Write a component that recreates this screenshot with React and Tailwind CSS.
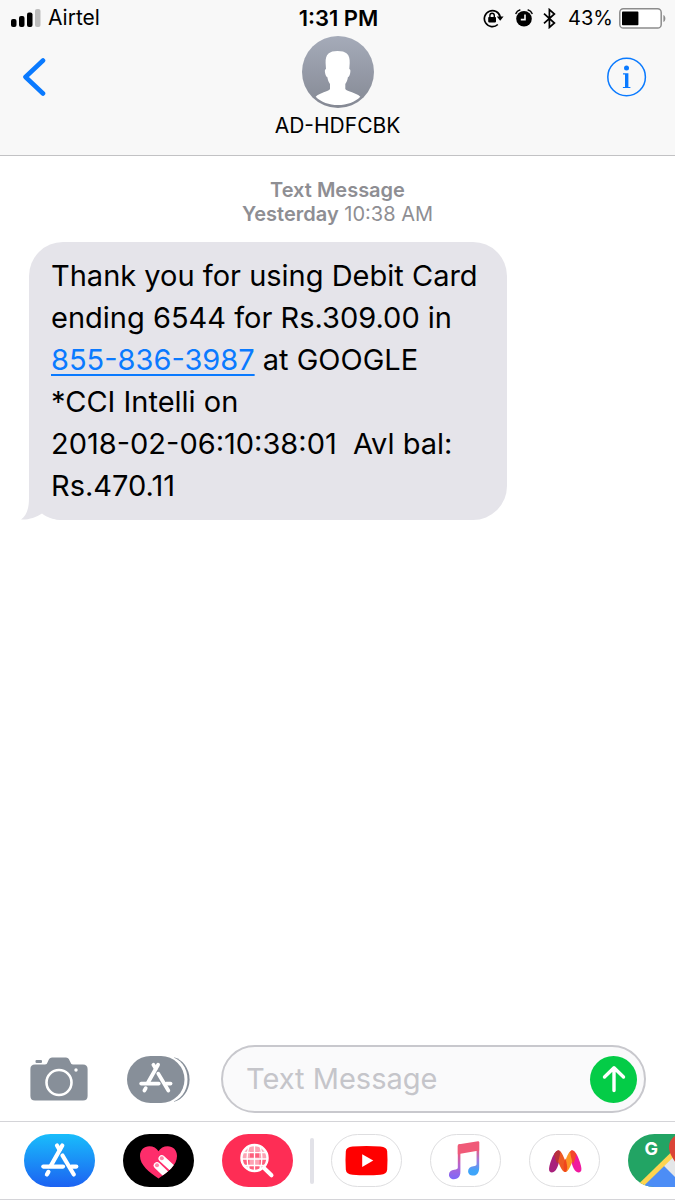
import React, { useState } from 'react';

const SignalBars = () => (
  <svg width="31" height="18" viewBox="0 0 31 18" aria-hidden="true">
    <rect x="0" y="10" width="5.5" height="8" rx="2" fill="#000" />
    <rect x="8" y="7" width="5.5" height="11" rx="2" fill="#000" />
    <rect x="16" y="3.5" width="5.5" height="14.5" rx="2" fill="#000" />
    <rect x="24" y="0" width="5.5" height="18" rx="2" fill="#bdbdbd" />
  </svg>
);

const RotationLock = () => (
  <svg width="21" height="20" viewBox="0 0 21 20" fill="none" aria-hidden="true">
    <path d="M14.8 16.5A8 8 0 1 1 17.2 9" stroke="#000" strokeWidth="1.7" />
    <path d="M13.8 8.4h6.8l-3.400 4.400z" fill="#000" />
    <rect x="5.200" y="9" width="7.800" height="5.400" rx="0.8" fill="#000" />
    <path d="M6.900 9.200V7.400a2.200 2.200 0 0 1 4.400 0v1.800" stroke="#000" strokeWidth="1.400" />
  </svg>
);

const AlarmClock = () => (
  <svg width="18" height="18" viewBox="0 0 18 18" fill="none" aria-hidden="true">
    <circle cx="9" cy="9.8" r="7.800" fill="#000" />
    <path d="M.9 4.400Q2 1.600 4.800.9M17.100 4.400Q16 1.600 13.200.9" stroke="#000" strokeWidth="1.500" strokeLinecap="round" />
    <path d="M10 5.400v5.200H5.800" stroke="#f8f8f8" strokeWidth="1.600" />
  </svg>
);

const Bluetooth = () => (
  <svg width="13" height="21" viewBox="0 0 13 21" fill="none" aria-hidden="true">
    <path d="M1 5.600l10.400 9.400-5 4.400V1.600l5 4.400L1 15.400" stroke="#000" strokeWidth="1.700" />
  </svg>
);

const Battery = () => (
  <svg width="47" height="21" viewBox="0 0 47 21" fill="none" aria-hidden="true">
    <rect x="0.8" y="0.8" width="41.4" height="19.2" rx="3.6" fill="#fff" stroke="#8c8c8c" strokeWidth="1.5" />
    <rect x="3" y="3.6" width="16.4" height="13.6" rx="0.8" fill="#000" />
    <path d="M44.4 7c2.6 1 2.6 6 0 7z" fill="#8c8c8c" />
  </svg>
);

const Avatar = () => (
  <svg width="72" height="72" viewBox="0 0 72 72" aria-hidden="true">
    <defs>
      <linearGradient id="avatarBg" x1="0" y1="0" x2="0" y2="1">
        <stop offset="0" stopColor="#a5abb9" />
        <stop offset="1" stopColor="#858994" />
      </linearGradient>
    </defs>
    <circle cx="36" cy="36" r="36" fill="url(#avatarBg)" />
    <path
      d="M35.500 15c-4 0-7 .8-9 2.500-2.400 2-3 5.500-2.900 9.500l.4 6c-1.300.3-1.300 2-.9 4 .4 2.200 1.100 3.800 2.300 4.200.4 3 1.200 4.800 2.600 6.800V53c-1.500 2.600-10.500 3.600-14.300 7.700C19 66 27 69 36 69s17-3 22.300-8.300C54.500 56.600 45 55.600 43.300 53v-5c1.400-2 2.200-3.800 2.600-6.800 1.200-.4 1.900-2 2.300-4.200.4-2 .4-3.700-.9-4l.4-6c.1-4-.5-7.500-2.900-9.500-2-1.700-5-2.500-9.300-2.500z"
      fill="#fff"
    />
  </svg>
);

const InfoIcon = () => (
  <svg width="40" height="40" viewBox="0 0 40 40" fill="none" aria-hidden="true">
    <circle cx="19.600" cy="20" r="18.800" stroke="#0a7aff" strokeWidth="1.500" />
    <circle cx="19.500" cy="11" r="2.500" fill="#0a7aff" />
    <path d="M16 16.300h5.400v13.600h2v1.200h-7.500v-1.200h2.100V17.500h-2z" fill="#0a7aff" />
  </svg>
);

const CameraIcon = () => (
  <svg width="58" height="44" viewBox="0 0 58 44" fill="none" aria-hidden="true">
    <path
      d="M5 7.500h10c1.500 0 2-.8 2.700-2.500C19 1.500 20 .4 23 .4h12c3 0 4 1.100 5.300 4.600.7 1.700 1.200 2.500 2.700 2.500h10c3 0 4.600 1.600 4.600 4.600V39c0 3-1.600 4.600-4.600 4.600H5C2 43.600.4 42 .4 39V12.100c0-3 1.600-4.600 4.600-4.600z"
      fill="#878f99"
    />
    <rect x="5.500" y="3" width="6.500" height="3" rx="1" fill="#878f99" />
    <circle cx="29" cy="25.500" r="12.500" stroke="#fff" strokeWidth="2.600" />
    <circle cx="46" cy="13" r="1.700" fill="#fff" />
  </svg>
);

const StoreStrokes = () => (
  <g stroke="#fff" strokeWidth="4.200" strokeLinecap="round" fill="none">
    <path d="M38.300 11.500L27 31.500" />
    <path d="M33 11.500l2.600 4.300" />
    <path d="M38.500 21.500L49.800 40.500" />
    <path d="M19.300 32.600H39" />
    <path d="M47.500 32.600h4.800" />
    <path d="M24.400 37.900l-1.500 2.600" />
  </g>
);

const AppsIcon = () => (
  <svg width="63" height="47" viewBox="0 0 63 47" fill="none" aria-hidden="true">
    <path d="M47 1.200C55 3 62.600 12 62.600 23.500S55 44 47 45.800z" fill="#878f99" />
    <path d="M27 -1h7c15 0 26.500 9 26.500 24.500S49 48 34 48h-7z" fill="#fff" />
    <rect x="0" y="0" width="57.500" height="47" rx="23.500" fill="#878f99" />
    <g transform="translate(-3 -1.500) scale(.89)">
      <StoreStrokes />
    </g>
  </svg>
);

const StoreApp = () => (
  <svg viewBox="0 0 71 53" className="size-full" aria-hidden="true">
    <defs>
      <linearGradient id="storeBg" x1="0" y1="0" x2="0" y2="1">
        <stop offset="0" stopColor="#19bdfb" />
        <stop offset="1" stopColor="#1c62f2" />
      </linearGradient>
    </defs>
    <rect width="71" height="53" fill="url(#storeBg)" />
    <StoreStrokes />
  </svg>
);

const HeartApp = () => (
  <svg viewBox="0 0 71 53" className="size-full" aria-hidden="true">
    <defs>
      <clipPath id="heartClip">
        <path d="M35.500 44.500C26 38 17 31 17 22c0-6 4.200-9.700 9.300-9.700 4 0 7.400 1.900 9.200 5 1.800-3.100 5.200-5 9.200-5 5.100 0 9.300 3.700 9.300 9.700 0 9-9 16-18.500 22.500z" />
      </clipPath>
    </defs>
    <rect width="71" height="53" fill="#000" />
    <g clipPath="url(#heartClip)">
      <rect width="71" height="53" fill="#fe2d6b" />
      <g strokeLinecap="round" strokeWidth="6.600" stroke="#fff">
        <path d="M38.800 24.500L53 37.500" />
        <path d="M34 31.500L48 45" />
      </g>
      <circle cx="38.800" cy="24.300" r="2" fill="#ff86a9" />
      <circle cx="34" cy="31.300" r="2" fill="#ff86a9" />
    </g>
  </svg>
);

const ImagesApp = () => (
  <svg viewBox="0 0 71 53" className="size-full" fill="none" aria-hidden="true">
    <rect width="71" height="53" fill="#fe2d55" />
    <circle cx="32.500" cy="24" r="13" fill="#fda3b4" />
    <path d="M28 17.500h9v6h-9zM20.500 25h7v6h-7zM37.500 25h6.500v6h-6.500zM28 31.500h9v5h-9z" fill="#fe5f7d" />
    <path d="M20 18.500h25M19 25h27M21 31.500h23M32.500 11v26M27 12c-2.500 8-2.500 16 0 24M38 12c2.500 8 2.500 16 0 24" stroke="#fff" strokeWidth="1.300" />
    <circle cx="32.500" cy="24" r="13" stroke="#fff" strokeWidth="2.500" />
    <path d="M42.500 34.500l7 6.800" stroke="#fff" strokeWidth="4" strokeLinecap="round" />
  </svg>
);

const YoutubeApp = () => (
  <svg viewBox="0 0 71 53" className="size-full" aria-hidden="true">
    <path d="M21 12Q35.500 10.800 50 12q6.500.4 7 5 .7 9.500 0 19-.5 4.800-7 5.200-14.500 1.200-29 0-6.500-.4-7-5.200-.7-9.500 0-19 .5-4.600 7-5z" fill="#f00" />
    <path d="M31 20v13.200l11.500-6.600z" fill="#fff" />
  </svg>
);

const MusicApp = () => (
  <svg viewBox="0 0 71 53" className="size-full" aria-hidden="true">
    <defs>
      <linearGradient id="noteLeft" x1="0" y1="0" x2="0" y2="1">
        <stop offset="0.200" stopColor="#f4566f" />
        <stop offset="0.600" stopColor="#b565d0" />
        <stop offset="1" stopColor="#7c68fa" />
      </linearGradient>
      <linearGradient id="noteRight" x1="0" y1="0" x2="0" y2="1">
        <stop offset="0.200" stopColor="#ee5b80" />
        <stop offset="0.550" stopColor="#a07be0" />
        <stop offset="0.850" stopColor="#3fa5fa" />
      </linearGradient>
    </defs>
    <path d="M27.500 11.200q0-1.400 1.500-1.700l1.200-.2V38.500c0 5-3.200 7.500-6.700 7.500-3 0-5.200-2-5.200-4.700 0-3 2.300-4.800 5.500-5.200 2.500-.3 3.700-.6 3.700-2z" fill="url(#noteLeft)" />
    <path d="M47 8l2.700-.6V34c0 5.500-2.500 8.200-6.300 8.200-3 0-5.200-2-5.200-4.600 0-3 2.300-4.800 5.400-5.200 2.600-.3 3.400-.8 3.400-2.300z" fill="url(#noteRight)" />
    <path d="M27.500 11.200q0-1.400 1.500-1.700l19.500-3.100q1.200-.1 1.200 1V16l-19.500 3.500-2.700.6z" fill="#f05a78" />
  </svg>
);

const MyntraApp = () => (
  <svg viewBox="0 0 71 53" className="size-full" aria-hidden="true">
    <path d="M29 16c-3 0-6 6-8 12-1.500 4.800-2.200 8.500-.8 10 1.500 1.600 4.500 1 6.300-1.500C29 33 31 25 31.500 18c-.5-1.500-1.300-2-2.500-2z" fill="#a8207c" />
    <path d="M43.500 16c3 0 6 6 8 12 1.500 4.800 2.200 8.500.8 10-1.500 1.600-4.500 1-6.300-1.500C43.500 33 41.500 25 41 18c.5-1.500 1.300-2 2.500-2z" fill="#f0199e" />
    <path d="M29 16c3.500 0 6.500 8 8.500 15 .8 3 .5 7.500-1.300 7.500-3.200 0-7.200-9-9.200-17 0-3 .5-5.500 2-5.500z" fill="#ee5a24" />
    <path d="M43.500 16c-3.500 0-6.500 8-8.500 15-.8 3-.5 7.500 1.300 7.500 3.200 0 7.200-9 9.200-17 0-3-.5-5.500-2-5.500z" fill="#fb9526" />
    <path d="M36.300 24.500c1 2.500 1.500 5 2 8.500.2 2.500-.7 5.500-2 5.500s-2.200-3-2-5.500c.5-3.500 1-6 2-8.500z" fill="#f1451c" />
    <path d="M29 16c-1.800 0-3 1.500-4.300 3.800 1 4.500 1.800 7.200 3.300 10.200 1.500-4 2.700-8 3-12-.5-1.400-1-2-2-2z" fill="#b8313b" />
    <path d="M43.500 16c1.800 0 3 1.500 4.300 3.800-1 4.500-1.800 7.200-3.300 10.200-1.500-4-2.700-8-3-12 .5-1.400 1-2 2-2z" fill="#f4452c" />
  </svg>
);

const MapsApp = () => (
  <svg viewBox="0 0 71 53" className="size-full" aria-hidden="true">
    <rect width="71" height="53" fill="#22a464" />
    <path d="M10 56L37 29l30 30z" fill="#4c8df6" />
    <path d="M35 31L71 67V34L42 22z" fill="#e4e6e8" />
    <path d="M8 56L48 17" stroke="#fdd44f" strokeWidth="5" />
    <path d="M49 32c-2-6-8-11-8-19a13 13 0 0 1 26 0c0 9-9 11-12 22z" fill="#db4437" />
    <text x="16.500" y="20.500" fill="#fff" className="font-['Inter',sans-serif] text-lg font-bold">
      G
    </text>
  </svg>
);

const recentApps = [
  { name: 'App Store', Icon: StoreApp },
  { name: 'Digital Touch', Icon: HeartApp },
  { name: 'Images', Icon: ImagesApp },
];

const installedApps = [
  { name: 'YouTube', Icon: YoutubeApp },
  { name: 'Music', Icon: MusicApp },
  { name: 'Myntra', Icon: MyntraApp },
];

const AppPill = ({ name, children, outlined }) => (
  <button
    type="button"
    aria-label={name}
    className={
      outlined
        ? 'h-[53px] w-[71px] shrink-0 overflow-hidden rounded-full border border-[#dedee0]'
        : 'h-[53px] w-[71px] shrink-0 overflow-hidden rounded-full'
    }
  >
    {children}
  </button>
);

const Header = () => (
  <header className="border-b border-[#c2c2c4] bg-[#f8f8f8]">
    <div className="grid h-9 grid-cols-[1fr_auto_1fr] items-center pl-[11px] pr-[9px]">
      <div className="flex items-center gap-[6px] text-[21px]">
        <SignalBars />
        <span>Airtel</span>
      </div>
      <span className="text-[22px] font-semibold">1:31 PM</span>
      <div className="flex items-center justify-end text-xl">
        <RotationLock />
        <span className="ml-[11px]">
          <AlarmClock />
        </span>
        <span className="ml-[10px]">
          <Bluetooth />
        </span>
        <span className="ml-3 mr-[6px]">43%</span>
        <Battery />
      </div>
    </div>
    <div className="grid grid-cols-[1fr_auto_1fr] items-start px-[22px] pb-[15px]">
      <button type="button" aria-label="Back" className="mt-[21px] flex h-10 w-10 items-center">
        <svg width="24" height="38" viewBox="0 0 24 38" fill="none" aria-hidden="true">
          <path d="M21 2.500L3.500 19 21 35.500" stroke="#0a7aff" strokeWidth="4.600" strokeLinecap="round" strokeLinejoin="round" />
        </svg>
      </button>
      <div className="flex flex-col items-center gap-1">
        <Avatar />
        <h1 className="text-[21px] leading-7">AD-HDFCBK</h1>
      </div>
      <button type="button" aria-label="Details" className="mr-[6px] mt-[21px] justify-self-end">
        <InfoIcon />
      </button>
    </div>
  </header>
);

const Message = () => (
  <div className="relative ml-[29px] w-[71%] max-w-[478px] rounded-[34px] bg-[#e5e4ea] px-[22px] py-[13px] text-[29px] leading-[42px]">
    <svg className="absolute -left-2 bottom-0" width="48" height="34" viewBox="0 0 48 34" aria-hidden="true">
      <path d="M0 33.500C5 30 8 24 8 12V0l40 10v24h-6c-9 0-16-2.500-21-6.500C15 31.500 7 34 0 33.500z" fill="#e5e4ea" />
    </svg>
    <p className="relative">
      <span>Thank you for using Debit Card ending 6544 for Rs.309.00 in </span>
      <a
        href="tel:8558363987"
        className="whitespace-nowrap text-[#0a7aff] underline decoration-2 underline-offset-4"
      >
        855-836-3987
      </a>
      <span> at GOOGLE </span>
      <span>*CCI Intelli on </span>
      <span className="whitespace-nowrap">2018-02-06:10:38:01</span>
      <span>&nbsp; Avl bal: </span>
      <span>Rs.470.11</span>
    </p>
  </div>
);

const Composer = () => {
  const [text, setText] = useState('');

  const handleSubmit = (e) => {
    e.preventDefault();
    setText('');
  };

  return (
    <form onSubmit={handleSubmit} className="flex items-center pb-2 pl-[30px] pr-[29px]">
      <button type="button" aria-label="Camera" className="shrink-0">
        <CameraIcon />
      </button>
      <button type="button" aria-label="Apps" className="ml-[39px] shrink-0">
        <AppsIcon />
      </button>
      <div className="ml-[31px] flex h-[68px] min-w-0 flex-1 items-center rounded-full border-2 border-[#c8c8cd] bg-[#fafafb] pl-[23px] pr-[7px]">
        <input
          type="text"
          aria-label="Text Message"
          placeholder="Text Message"
          value={text}
          onChange={(e) => setText(e.target.value)}
          className="min-w-0 flex-1 bg-transparent text-[29px] outline-none placeholder:text-[#c5c5ca]"
        />
        <button
          type="submit"
          aria-label="Send"
          className="flex size-[47px] shrink-0 items-center justify-center rounded-full bg-[#04cc47]"
        >
          <svg width="24" height="28" viewBox="0 0 24 28" fill="none" aria-hidden="true">
            <path d="M12 25.500V3.500M2.500 12L12 2.800 21.500 12" stroke="#fff" strokeWidth="3.400" strokeLinecap="round" strokeLinejoin="round" />
          </svg>
        </button>
      </div>
    </form>
  );
};

const AppStrip = () => (
  <nav
    aria-label="Message apps"
    className="flex items-center overflow-hidden border-y border-[#d4d4d8] py-3 pl-6"
  >
    <div className="flex gap-7">
      {recentApps.map(({ name, Icon }) => (
        <AppPill key={name} name={name}>
          <Icon />
        </AppPill>
      ))}
    </div>
    <div className="mx-[17px] h-[46px] w-1 shrink-0 rounded-full bg-[#e2e2e8]" />
    <div className="flex gap-7">
      {installedApps.map(({ name, Icon }) => (
        <AppPill key={name} name={name} outlined>
          <Icon />
        </AppPill>
      ))}
      <AppPill name="Google Maps">
        <MapsApp />
      </AppPill>
    </div>
  </nav>
);

const App = () => {
  return (
    <div className="flex min-h-screen flex-col bg-white font-['Inter',sans-serif] text-black">
      <Header />
      <main className="flex-1">
        <div className="pb-4 pt-[22px] text-center text-xl leading-6 text-[#8e8e93]">
          <p className="font-semibold">Text Message</p>
          <p>
            <span className="font-semibold">Yesterday</span> 10:38 AM
          </p>
        </div>
        <Message />
      </main>
      <footer>
        <Composer />
        <AppStrip />
      </footer>
    </div>
  );
};

export default App;
